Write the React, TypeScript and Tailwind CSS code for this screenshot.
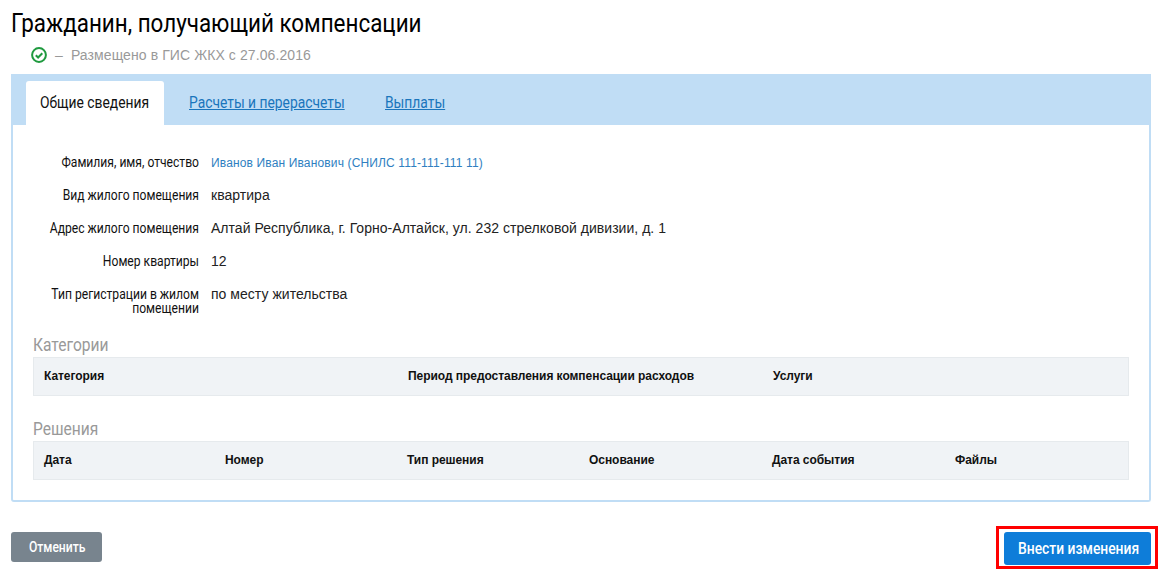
const sans = "font-['Liberation_Sans',Arial,sans-serif]";
const cond = "font-['Roboto',sans-serif]";

const INFO = [
  { label: 'Вид жилого помещения', value: 'квартира' },
  { label: 'Адрес жилого помещения', value: 'Алтай Республика, г. Горно-Алтайск, ул. 232 стрелковой дивизии, д. 1' },
  { label: 'Номер квартиры', value: '12' },
];

// no condensed face installed, so Roboto gets squeezed horizontally
function Squeezed({ children }: { children: React.ReactNode }) {
  return <span className={`block origin-left scale-x-[0.865] whitespace-nowrap ${cond}`}>{children}</span>;
}

function Row({ label, children }: { label: string; children: React.ReactNode }) {
  return (
    <div className="flex items-start">
      <div className="flex w-[166px] shrink-0 justify-end">
        <div className={`w-[192px] shrink-0 origin-right scale-x-[0.865] text-right text-[14px] leading-[14px] text-[#111] ${cond}`}>
          {label}
        </div>
      </div>
      <div className={`ml-[12px] text-[14px] leading-[14px] tracking-[0.03px] text-[#222] ${sans}`}>{children}</div>
    </div>
  );
}

function HeadRow({ cols }: { cols: { title: string; width: string }[] }) {
  return (
    <div className="flex h-[39px] items-center border border-[#e6eaed] bg-[#f0f3f6] pb-[2px] pl-[10px]">
      {cols.map((c) => (
        <div key={c.title} className={`${c.width} text-[12px] font-bold tracking-[-0.05px] text-[#111] ${sans}`}>
          {c.title}
        </div>
      ))}
    </div>
  );
}

export default function App() {
  return (
    <div className="h-[582px] w-[1158px] overflow-hidden bg-white pt-[8px]">
      <h1 className="ml-[11px] text-[26px] leading-[30px] text-black">
        <span className={`block origin-left scale-x-[0.862] whitespace-nowrap ${cond}`}>Гражданин, получающий компенсации</span>
      </h1>
      <div className={`ml-[31px] mt-[8px] flex h-[18px] items-center text-[14px] tracking-[0.09px] text-[#999] ${sans}`}>
        <svg width="16" height="16" viewBox="0 0 16 16" fill="none" stroke="#1f9a3f" strokeWidth="2">
          <circle cx="8" cy="8" r="6.9" />
          <path d="M4.8 8.2l2.3 2.3 4.2-4.3" />
        </svg>
        <span className="ml-[8px]">–</span>
        <span className="ml-[8px]">Размещено в ГИС ЖКХ с 27.06.2016</span>
      </div>

      <div className="ml-[11px] mt-[10px] w-[1140px]">
        <div className="flex h-[51px] items-end bg-[#c0ddf5] pl-[15px]">
          <div className="h-[44px] w-[138px] rounded-t-[3px] bg-white pl-[14px] pt-[12px] text-[16px] leading-[20px] text-[#111]">
            <Squeezed>Общие сведения</Squeezed>
          </div>
          <a className="mb-[12px] ml-[25px] w-[156px] text-[16px] leading-[20px] text-[#1a75bc] underline">
            <Squeezed>Расчеты и перерасчеты</Squeezed>
          </a>
          <a className="mb-[12px] ml-[40px] w-[61px] text-[16px] leading-[20px] text-[#1a75bc] underline">
            <Squeezed>Выплаты</Squeezed>
          </a>
        </div>

        <div className="h-[377px] rounded-b-[3px] border-2 border-t-0 border-[#c0ddf5] px-[20px] pt-[30px]">
          <div className="flex flex-col gap-[19px]">
            <Row label="Фамилия, имя, отчество">
              <span className="block translate-y-[1px] text-[12px] tracking-[0.14px] text-[#2f7fc1]">
                Иванов Иван Иванович (СНИЛС 111-111-111 11)
              </span>
            </Row>
            {INFO.map((r) => (
              <Row key={r.label} label={r.label}>
                {r.value}
              </Row>
            ))}
            <Row label="Тип регистрации в жилом помещении">по месту жительства</Row>
          </div>

          <h2 className="mt-[19px] text-[18px] leading-[22px] text-[#999]">
            <Squeezed>Категории</Squeezed>
          </h2>
          <div className="mt-[1px]">
            <HeadRow
              cols={[
                { title: 'Категория', width: 'w-[364px]' },
                { title: 'Период предоставления компенсации расходов', width: 'w-[365px]' },
                { title: 'Услуги', width: 'w-[200px]' },
              ]}
            />
          </div>

          <h2 className="mt-[22px] text-[18px] leading-[22px] text-[#999]">
            <Squeezed>Решения</Squeezed>
          </h2>
          <div className="mt-[1px]">
            <HeadRow
              cols={[
                { title: 'Дата', width: 'w-[181px]' },
                { title: 'Номер', width: 'w-[182px]' },
                { title: 'Тип решения', width: 'w-[182px]' },
                { title: 'Основание', width: 'w-[183px]' },
                { title: 'Дата события', width: 'w-[183px]' },
                { title: 'Файлы', width: 'w-[100px]' },
              ]}
            />
          </div>
        </div>
      </div>

      <div className="mt-[24px] flex items-start justify-between pl-[11px]">
        <button className="mt-[6px] h-[30px] w-[91px] rounded-[3px] bg-[#78848e] pl-[12px] text-[14px] font-medium text-white">
          <Squeezed>Отменить</Squeezed>
        </button>
        <div className="border-[3px] border-[#f00] pb-[1px] pl-[5px] pr-[4px] pt-[3px]">
          <button className="block h-[33px] w-[147px] rounded-[3px] bg-[#0e7dd9] pl-[14px] text-[16px] font-medium text-white">
            <Squeezed>Внести изменения</Squeezed>
          </button>
        </div>
      </div>
    </div>
  );
}
